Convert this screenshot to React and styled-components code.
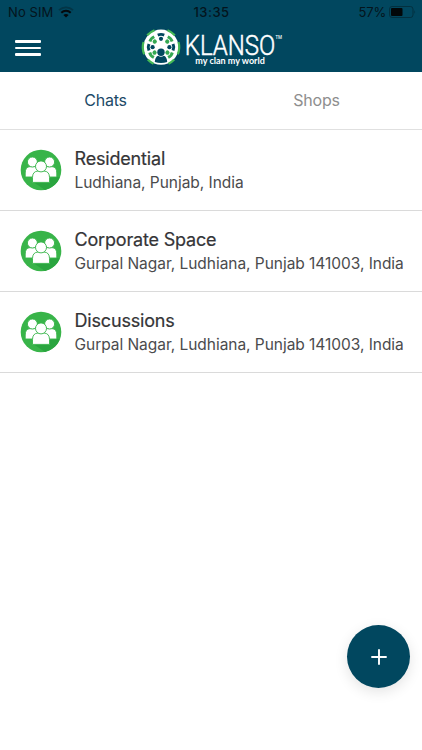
import React from 'react';
import styled, { createGlobalStyle } from 'styled-components';

const GlobalStyle = createGlobalStyle`
  * {
    box-sizing: border-box;
  }

  body {
    margin: 0;
    background: #ffffff;
    font-family: Inter, "Liberation Sans", sans-serif;
  }
`;

const Screen = styled.div`
  position: relative;
  height: 750px;
  overflow: hidden;
  background: #ffffff;
`;

const Header = styled.header`
  height: 72px;
  background: #01475f;
`;

const StatusBar = styled.div`
  display: grid;
  grid-template-columns: 1fr auto 1fr;
  align-items: center;
  height: 24px;
  padding: 0 6px 0 8px;
  font-size: 13px;
  line-height: 24px;
  color: #04141c;
`;

const StatusGroup = styled.div`
  display: flex;
  align-items: center;
  justify-content: ${(props) => (props.$end ? 'flex-end' : 'flex-start')};
  gap: ${(props) => (props.$end ? '3px' : '5px')};
  letter-spacing: ${(props) => (props.$end ? '-0.2px' : '0.1px')};
`;

const Clock = styled.div`
  margin-right: 1px;
  font-weight: 500;
  letter-spacing: 0.5px;
`;

const NavBar = styled.div`
  display: flex;
  align-items: center;
  height: 48px;
  padding-left: 15px;
`;

const MenuButton = styled.button`
  display: flex;
  flex-direction: column;
  gap: 4px;
  width: 26px;
  margin-right: 99px;
  padding: 0;
  border: 0;
  background: none;

  span {
    height: 2.4px;
    border-radius: 1px;
    background: #ffffff;
  }
`;

const LogoSvg = styled.svg`
  display: block;
  width: 144px;
  height: 48px;
  overflow: visible;
`;

const Tabs = styled.nav`
  display: grid;
  grid-template-columns: 1fr 1fr;
  height: 58px;
  border-bottom: 1px solid #e0e0e0;
`;

const Tab = styled.button`
  padding: 0 0 1px;
  border: 0;
  background: none;
  font-family: inherit;
  font-size: 16px;
  letter-spacing: -0.2px;
  color: ${(props) => (props.$active ? '#1c4a67' : '#8e8e8e')};
`;

const List = styled.ul`
  margin: 0;
  padding: 0;
  list-style: none;
`;

const Row = styled.li`
  display: flex;
  align-items: center;
  gap: 12.5px;
  height: 81px;
  padding-left: 20px;
  border-bottom: 1px solid #dadada;
`;

const RowText = styled.div`
  white-space: nowrap;
  color: #353537;
`;

const RowTitle = styled.div`
  font-size: 18px;
  line-height: 24px;
  font-weight: 400;
  letter-spacing: -0.18px;
  -webkit-text-stroke: 0.2px #353537;
`;

const RowAddress = styled.div`
  font-size: 15.5px;
  line-height: 23px;
  letter-spacing: -0.04px;
  color: #4b4b4d;
`;

const AddButton = styled.button`
  position: absolute;
  right: 12px;
  bottom: 62px;
  display: flex;
  align-items: center;
  justify-content: center;
  width: 63px;
  height: 63px;
  padding: 0;
  border: 0;
  border-radius: 50%;
  background: #01475f;
  box-shadow: 0 4px 14px rgba(0, 0, 0, 0.11);
`;

const chats = [
  { title: 'Residential', address: 'Ludhiana, Punjab, India' },
  { title: 'Corporate Space', address: 'Gurpal Nagar, Ludhiana, Punjab 141003, India' },
  { title: 'Discussions', address: 'Gurpal Nagar, Ludhiana, Punjab 141003, India' },
];

const WifiIcon = () => (
  <svg width="16" height="12" viewBox="0 0 16 12" fill="none">
    <path d="M1 4.2C5 .4 11 .4 15 4.2" stroke="#033546" strokeWidth="1.8" />
    <path d="M3.3 6.8C6 4.2 10 4.2 12.7 6.8" stroke="#04090c" strokeWidth="2" />
    <path d="M5.4 9Q8 6.9 10.6 9L8 11.6Z" fill="#04090c" />
  </svg>
);

const BatteryIcon = () => (
  <svg width="27" height="12" viewBox="0 0 27 12">
    <rect x=".5" y=".5" width="23.5" height="11" rx="2.6" fill="none" stroke="#03303f" />
    <rect x="2" y="2" width="11.5" height="8" rx="1" fill="#020709" />
    <path d="M25.3 4q1.6 2 0 4Z" fill="#03303f" />
  </svg>
);

const NAVY = '#01475f';
const GREEN = '#35a852';

// figures around the wheel, the one at the bottom is drawn larger
const people = [
  { angle: 0, color: NAVY },
  { angle: 48, color: GREEN },
  { angle: 90, color: NAVY },
  { angle: 130, color: GREEN },
  { angle: 230, color: GREEN },
  { angle: 270, color: NAVY },
  { angle: 312, color: GREEN },
];

const Logo = () => (
  <LogoSvg viewBox="0 0 144 48">
    <circle cx="21" cy="23.2" r="17.6" fill="#ffffff" />
    <g fill="none" stroke="#45b955" strokeWidth="2.2">
      <path d="M7.2 11.3A18.2 18.2 0 0 1 14.5 6.2" />
      <path d="M27.5 6.2A18.2 18.2 0 0 1 34.8 11.3" />
      <path d="M38.5 18A18.2 18.2 0 0 1 37.8 30.2" />
      <path d="M3.5 18A18.2 18.2 0 0 0 4.2 30.2" />
      <path d="M7.8 35.6A18.2 18.2 0 0 0 13.5 39.8" />
      <path d="M34.2 35.6A18.2 18.2 0 0 1 28.5 39.8" />
    </g>
    {people.map((person) => (
      <g key={person.angle} transform={`rotate(${person.angle} 21 23.2)`} fill={person.color}>
        <circle cx="21" cy="14.8" r="2.1" />
        <path d="M17.2 9.8Q21 8 24.8 9.8L23.7 12.6Q21 11 18.3 12.6Z" />
      </g>
    ))}
    <circle cx="21" cy="28.2" r="3.7" fill={NAVY} />
    <path d="M14.8 38Q15 33 18.1 31.8Q21 33.9 23.9 31.8Q27 33 27.2 38Q21 40.2 14.8 38Z" fill={NAVY} />
    <text x="44.8" y="31.3" fontFamily="Roboto, sans-serif" fontSize="28" fontWeight="300" textLength="90.5" lengthAdjust="spacingAndGlyphs" fill="#ffffff" stroke="#ffffff" strokeWidth=".5">KLANSO</text>
    <text x="135.5" y="14.6" fontFamily="'Open Sans', sans-serif" fontSize="5" fontWeight="600" textLength="6.5" lengthAdjust="spacingAndGlyphs" fill="#ffffff">TM</text>
    <text x="55.3" y="39.8" fontFamily="Lato, sans-serif" fontSize="9.2" fontWeight="700" textLength="69.5" lengthAdjust="spacingAndGlyphs" fill="#ffffff">my clan my world</text>
  </LogoSvg>
);

const GroupIcon = () => (
  <svg width="42" height="42" viewBox="0 0 42 42">
    <circle cx="21" cy="21" r="20.3" fill="#38b449" />
    <path d="M13.3 33L35.7 27.5L39.8 28.5Q36 38 25 40.9Z" fill="#2aa53f" />
    <g fill="#ffffff" stroke="#38b449" strokeWidth=".9">
      <path d="M5.2 28V24Q5.2 18 10 17.6H15Q19.5 18 19.5 24V28Z" />
      <circle cx="12.4" cy="13" r="5" />
      <path d="M22.5 28V24Q22.5 18 27 17.6H32Q36.8 18 36.8 24V28Z" />
      <circle cx="29.6" cy="13" r="5" />
      <path d="M12.5 33.4V28.5Q12.5 22.4 18 22H24Q29.5 22.4 29.5 28.5V33.4Z" />
      <circle cx="21" cy="17.4" r="5.5" />
    </g>
  </svg>
);

const App = () => {
  return (
    <Screen>
      <GlobalStyle />
      <Header>
        <StatusBar>
          <StatusGroup>
            No SIM
            <WifiIcon />
          </StatusGroup>
          <Clock>13:35</Clock>
          <StatusGroup $end>
            57%
            <BatteryIcon />
          </StatusGroup>
        </StatusBar>
        <NavBar>
          <MenuButton aria-label="Menu">
            <span />
            <span />
            <span />
          </MenuButton>
          <Logo />
        </NavBar>
      </Header>
      <Tabs>
        <Tab $active>Chats</Tab>
        <Tab>Shops</Tab>
      </Tabs>
      <List>
        {chats.map((chat) => (
          <Row key={chat.title}>
            <GroupIcon />
            <RowText>
              <RowTitle>{chat.title}</RowTitle>
              <RowAddress>{chat.address}</RowAddress>
            </RowText>
          </Row>
        ))}
      </List>
      <AddButton aria-label="Add">
        <svg width="16" height="16" viewBox="0 0 16 16" stroke="#ffffff" strokeWidth="1.9" strokeLinecap="round">
          <path d="M8 1V15M1 8H15" />
        </svg>
      </AddButton>
    </Screen>
  );
};

export default App;
